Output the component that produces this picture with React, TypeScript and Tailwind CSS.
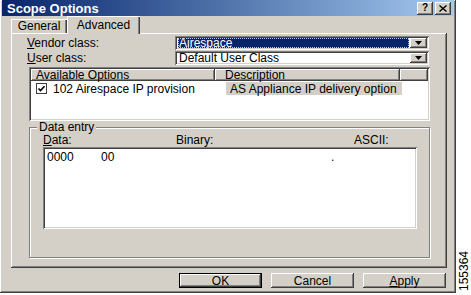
import React from "react";

const raised =
  "shadow-[inset_-1px_-1px_#404040,inset_1px_1px_#ffffff,inset_-2px_-2px_#808080,inset_2px_2px_#d4d0c8]";
const sunken =
  "shadow-[inset_1px_1px_#808080,inset_-1px_-1px_#ffffff,inset_2px_2px_#404040,inset_-2px_-2px_#d4d0c8]";

function Arrow() {
  return (
    <svg width="7" height="4" viewBox="0 0 7 4">
      <path d="M0 0h7L3.5 4z" fill="#000" />
    </svg>
  );
}

function Combo({ value, selected }: { value: string; selected?: boolean }) {
  return (
    <div className={`flex h-[14px] w-[254px] bg-white p-[2px] ${sunken}`}>
      <div className="flex-1 flex items-center pl-[1px] pr-[1px]">
        <div
          className={`h-full w-full flex items-center pl-[1px] leading-none ${
            selected
              ? "bg-[#0a246a] text-white outline-1 outline-dotted outline-[#a6caf0] -outline-offset-1"
              : "text-black"
          }`}
        >
          {value}
        </div>
      </div>
      <div className={`w-[17px] h-full bg-[#d4d0c8] flex items-center justify-center ${raised}`}>
        <Arrow />
      </div>
    </div>
  );
}

function Btn({ children, def }: { children: React.ReactNode; def?: boolean }) {
  return (
    <div
      className={`w-[83px] h-[15px] bg-[#d4d0c8] flex items-center justify-center leading-none ${
        def
          ? "shadow-[inset_1px_1px_#000,inset_-1px_-1px_#000,inset_-2px_-2px_#404040,inset_2px_2px_#ffffff,inset_-3px_-3px_#808080]"
          : raised
      }`}
    >
      {children}
    </div>
  );
}

export default function App() {
  return (
    <div className="w-[471px] h-[295px] flex bg-white overflow-hidden text-[12px] text-black [font-family:'Liberation_Sans',Arial,sans-serif]">
      <div className={`w-[456px] h-[293px] bg-[#d4d0c8] flex flex-col px-[2px] ${raised}`}>
        {/* title bar */}
        <div className="h-[16px] flex items-center bg-linear-to-r from-[#0a246a] to-[#a6caf0]">
          <span className="pl-[5px] text-[13px] font-bold text-white leading-none">Scope Options</span>
          <div className="ml-auto flex gap-[2px] mr-[3px]">
            <div className={`w-[16px] h-[13px] bg-[#d4d0c8] flex items-center justify-center text-[10px] font-bold leading-none ${raised}`}>
              ?
            </div>
            <div className={`w-[16px] h-[13px] bg-[#d4d0c8] flex items-center justify-center ${raised}`}>
              <svg width="8" height="7" viewBox="0 0 8 7">
                <path d="M0.5 0.5L7.5 6.5M7.5 0.5L0.5 6.5" stroke="#000" strokeWidth="1.4" />
              </svg>
            </div>
          </div>
        </div>

        {/* tabs */}
        <div className="h-[17px] flex items-end pl-[9px]">
          <div className="w-[56px] h-[14px] flex items-center justify-center leading-none shadow-[inset_1px_1px_#ffffff,inset_-1px_0_#404040,inset_-2px_0_#808080]">
            General
          </div>
          <div className="relative z-10 w-[73px] h-[18px] -mb-px bg-[#d4d0c8] flex items-center justify-center leading-none shadow-[inset_1px_1px_#ffffff,inset_-1px_0_#404040,inset_-2px_0_#808080]">
            Advanced
          </div>
        </div>

        {/* panel */}
        <div className={`ml-[9px] mr-[7px] h-[235px] flex flex-col pt-[3px] ${raised}`}>
          <div className="h-[14px] flex items-center">
            <span className="w-[164px] pl-[16px] leading-none">
              <u>V</u>endor class:
            </span>
            <Combo value="Airespace" selected />
          </div>
          <div className="h-[14px] mt-[1px] flex items-center">
            <span className="w-[164px] pl-[16px] leading-none">
              <u>U</u>ser class:
            </span>
            <Combo value="Default User Class" />
          </div>

          {/* list view */}
          <div className={`mt-[2px] ml-[18px] mr-[17px] h-[54px] bg-white p-[2px] flex flex-col ${sunken}`}>
            <div className="h-[12px] flex">
              <div className={`w-[184px] h-full bg-[#d4d0c8] flex items-center pl-[5px] leading-none ${raised}`}>
                Available Options
              </div>
              <div className={`w-[185px] h-full bg-[#d4d0c8] flex items-center pl-[10px] leading-none ${raised}`}>
                Description
              </div>
              <div className={`flex-1 h-full bg-[#d4d0c8] ${raised}`} />
            </div>
            <div className="h-[13px] mt-[1px] flex items-center">
              <div className="w-[195px] flex items-center pl-[5px]">
                <div className="w-[11px] h-[11px] border border-[#404040] bg-white flex items-center justify-center">
                  <svg width="9" height="9" viewBox="0 0 9 9">
                    <path d="M1.5 4.5L3.5 6.5L7.5 2.2" stroke="#000" strokeWidth="1.6" fill="none" />
                  </svg>
                </div>
                <span className="ml-[6px] leading-none">102 Airespace IP provision</span>
              </div>
              <div className="w-[176px] h-full bg-[#d4d0c8] flex items-center pl-[4px] leading-none">
                AS Appliance IP delivery option
              </div>
            </div>
          </div>

          {/* data entry group */}
          <div className="relative mt-[6px] ml-[18px] mr-[17px] h-[131px] border border-[#808080] shadow-[1px_1px_#ffffff,inset_1px_1px_#ffffff] flex flex-col pl-[13px] pr-[12px]">
            <span className="absolute -top-[7px] left-[7px] px-[2px] bg-[#d4d0c8] leading-none">Data entry</span>
            <div className="mt-[5px] h-[13px] flex items-center leading-none">
              <span className="w-[133px]">
                <u>D</u>ata:
              </span>
              <span className="w-[178px]">Binary:</span>
              <span>ASCII:</span>
            </div>
            <div className={`mt-[1px] h-[82px] bg-white ${sunken} px-[4px] pt-[4px] flex leading-none`}>
              <span className="w-[54px]">0000</span>
              <span className="w-[230px]">00</span>
              <span>.</span>
            </div>
          </div>
        </div>

        {/* buttons */}
        <div className="mt-[5px] flex justify-end gap-[9px] pr-[8px]">
          <Btn def>OK</Btn>
          <Btn>Cancel</Btn>
          <Btn>
            <span>
              <u>A</u>pply
            </span>
          </Btn>
        </div>
      </div>

      <div className="flex-1 flex flex-col justify-end items-center pb-[4px]">
        <span className="[writing-mode:vertical-rl] rotate-180 text-[12px] leading-none">155364</span>
      </div>
    </div>
  );
}
